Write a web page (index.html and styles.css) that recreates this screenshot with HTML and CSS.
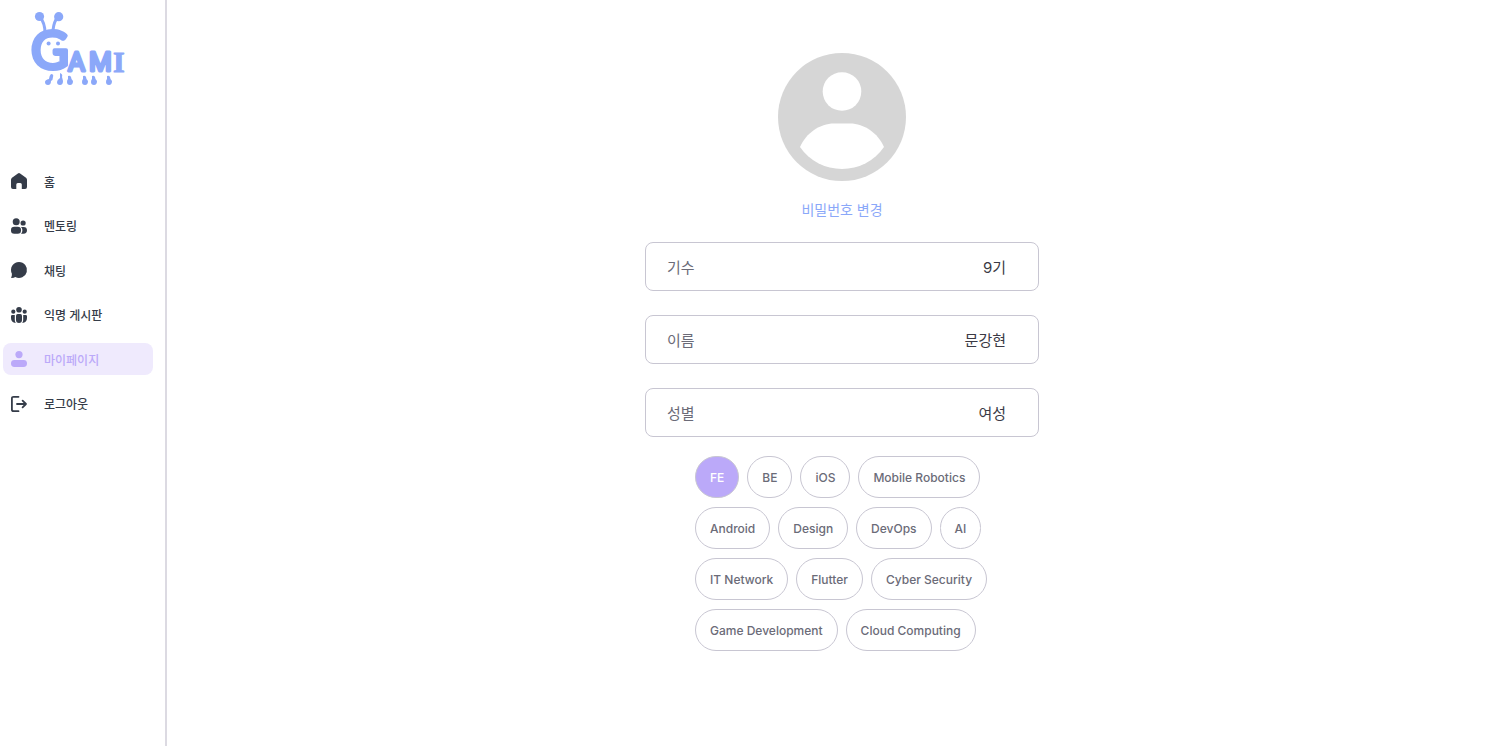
FILE: index.html
```
<!DOCTYPE html>
<html lang="ko">
<head>
  <meta charset="UTF-8">
  <meta name="viewport" content="width=device-width, initial-scale=1.0">
  <title>GAMI - 마이페이지</title>
  <link rel="stylesheet" href="styles.css">
</head>
<body>
  <div class="layout">
    <aside class="sidebar">
      <a href="#" class="logo" aria-label="GAMI">
        <svg width="96" height="76" viewBox="30 11 96 76">
          <!-- antennae -->
          <g class="logo-line">
            <path d="M40 17Q45 23 45 33M58 17Q54 21 53 30"/>
          </g>
          <circle cx="39.500" cy="16.500" r="4.600"/>
          <circle cx="58.700" cy="16.700" r="4.600"/>
          <!-- eyes -->
          <circle cx="48.600" cy="43.500" r="2"/>
          <circle cx="58" cy="43.500" r="2"/>
          <text class="logo-g" x="31" y="69">G</text>
          <text class="logo-text" x="68" y="71">A</text>
          <text class="logo-text" x="89" y="71">M</text>
          <text class="logo-slab" x="113" y="72">I</text>
          <!-- feet -->
          <path d="M51 74q3 0 2 3q0 3-2 4q0 4-3 4q-3 0-3-3q0-2 4-3q0-3 2-5z"/>
          <path d="M60 73q3 1 2 4l1 4q0 4-3 4q-3 0-3-3q0-2 3-4z"/>
          <path id="foot" d="M68 76q2-1 3 1q0 2 2 4q0 4-3 4q-3 0-3-3q0-2 1-3z"/>
          <use href="#foot" x="15"/>
          <use href="#foot" x="24"/>
          <use href="#foot" x="39"/>
        </svg>
      </a>
      <nav class="menu">
        <a href="#" class="menu-item">
          <svg class="icon" viewBox="0 0 16 16"><path d="M6.900.4Q8-.4 9.100.4L15 4.700q1 .8 1 2V14q0 2-2 2h-3.200v-4.500q0-1.500-1.500-1.500H6.800q-1.500 0-1.500 1.500V16H2q-2 0-2-2V6.700q0-1.200 1-2z"/></svg>
          <span>홈</span>
        </a>
        <a href="#" class="menu-item">
          <svg class="icon" viewBox="0 0 16 16"><circle cx="5.200" cy="3.800" r="3.500"/><circle cx="12.100" cy="5" r="2.600"/><rect y="8.800" width="10" height="7" rx="3.300"/><path d="M10 8.900h2.500q3.500 0 3.500 3.400t-3.500 3.500H10q1.400-1.400 1.400-3.500T10 8.900z"/></svg>
          <span>멘토링</span>
        </a>
        <a href="#" class="menu-item">
          <svg class="icon" viewBox="0 0 16 16"><path d="M8 0a8 8 0 1 1-3.700 15.100Q3 16 .7 16q-.9 0-.5-.8Q1 14 .9 11.700A8 8 0 0 1 8 0z"/></svg>
          <span>채팅</span>
        </a>
        <a href="#" class="menu-item">
          <svg class="icon" viewBox="0 0 16 16"><circle cx="8" cy="2.700" r="2.800"/><circle cx="2.300" cy="4.700" r="2.100"/><circle cx="13.700" cy="4.700" r="2.100"/><path d="M6.700 7h2.600Q11 7 11 9v4q0 3-3 3t-3-3V9q0-2 1.700-2zM1.300 8h2.500v5q0 1.700 1 3Q0 15.500 0 11V9.300Q0 8 1.300 8zM12.200 8h2.500Q16 8 16 9.300V11q0 4.500-4.800 5 1-1.300 1-3z"/></svg>
          <span>익명 게시판</span>
        </a>
        <a href="#" class="menu-item active">
          <svg class="icon" viewBox="0 0 16 16"><circle cx="8" cy="3.600" r="3.600"/><rect y="9" width="16" height="7" rx="3.400"/></svg>
          <span>마이페이지</span>
        </a>
        <a href="#" class="menu-item">
          <svg class="icon" viewBox="0 0 16 16"><path class="icon-line" d="M7.500.8H2.600Q.9.800.9 2.500v11q0 1.700 1.700 1.700h4.900M6 8h9M11.600 4.600 15 8l-3.400 3.400"/></svg>
          <span>로그아웃</span>
        </a>
      </nav>
    </aside>

    <main class="content">
      <svg class="avatar" viewBox="0 0 128 128">
        <circle class="avatar-bg" cx="64" cy="64" r="64"/>
        <circle class="avatar-body" cx="64" cy="38.500" r="19.300"/>
        <path class="avatar-body" d="M22 94C28 80 42 70.500 56 70.500h16c14 0 28 9.500 34 23.500a51 51 0 0 1-84 0z"/>
      </svg>
      <a href="#" class="password-link">비밀번호 변경</a>

      <form class="profile">
        <div class="field">
          <label for="generation">기수</label>
          <input id="generation" type="text" value="9기" readonly>
        </div>
        <div class="field">
          <label for="name">이름</label>
          <input id="name" type="text" value="문강현" readonly>
        </div>
        <div class="field">
          <label for="gender">성별</label>
          <input id="gender" type="text" value="여성" readonly>
        </div>
      </form>

      <div class="majors">
        <button type="button" class="major selected">FE</button>
        <button type="button" class="major">BE</button>
        <button type="button" class="major">iOS</button>
        <button type="button" class="major">Mobile Robotics</button>
        <button type="button" class="major">Android</button>
        <button type="button" class="major">Design</button>
        <button type="button" class="major">DevOps</button>
        <button type="button" class="major">AI</button>
        <button type="button" class="major">IT Network</button>
        <button type="button" class="major">Flutter</button>
        <button type="button" class="major">Cyber Security</button>
        <button type="button" class="major">Game Development</button>
        <button type="button" class="major">Cloud Computing</button>
      </div>
    </main>
  </div>
</body>
</html>
```
FILE: styles.css
```
* {
  box-sizing: border-box;
}
body {
  margin: 0;
  background-color: #ffffff;
  font-family: Inter, "Noto Sans CJK KR", sans-serif;
  color: #353c49;
}
a {
  color: inherit;
  text-decoration: none;
}
.layout {
  display: flex;
  min-height: 100vh;
}
.sidebar {
  flex: none;
  width: 167px;
  padding: 11px 12px 0 3px;
  border-right: 2px solid #dcdae2;
}
.logo {
  display: block;
  height: 76px;
  margin: 0 0 78px 27px;
  fill: #8ba8f9;
}
.logo-line {
  fill: none;
  stroke: #8ba8f9;
  stroke-width: 3;
}
.logo-g,
.logo-text,
.logo-slab {
  stroke: #8ba8f9;
  stroke-linejoin: round;
}
.logo-g {
  font: 400 52px Lato, sans-serif;
  stroke-width: 4;
}
.logo-text {
  font: 400 26px Roboto, sans-serif;
  stroke-width: 3;
}
.logo-slab {
  font: 700 30px "Liberation Serif", serif;
  stroke-width: 1;
}
.menu {
  display: flex;
  flex-direction: column;
  justify-content: space-between;
  height: 255px;
}
.menu-item {
  display: flex;
  align-items: center;
  gap: 17px;
  height: 32px;
  padding: 0 8px;
  border-radius: 8px;
  font-size: 12px;
  font-weight: 500;
}
.menu-item.active {
  background-color: #efeafd;
  color: #bba9f9;
}
.icon {
  width: 16px;
  height: 16px;
  fill: currentColor;
  overflow: visible;
}
.icon-line {
  fill: none;
  stroke: currentColor;
  stroke-width: 1.800;
  stroke-linecap: round;
  stroke-linejoin: round;
}
.content {
  flex: 1;
  display: flex;
  flex-direction: column;
  align-items: center;
  padding: 53px 0 40px 19px;
}
.avatar {
  width: 128px;
  height: 128px;
}
.avatar-bg {
  fill: #d6d6d6;
}
.avatar-body {
  fill: #ffffff;
}
.password-link {
  margin: 19px 0 22px;
  font-size: 14px;
  line-height: 20px;
  color: #8ba8f9;
}
.profile {
  display: flex;
  flex-direction: column;
  gap: 24px;
  width: 100%;
  max-width: 394px;
}
.field {
  display: flex;
  align-items: center;
  justify-content: space-between;
  height: 49px;
  padding: 0 32px 0 21px;
  border: 1px solid #c8c6d2;
  border-radius: 8px;
  font-size: 15px;
}
.field label {
  color: #6b6b78;
}
.field input {
  width: 200px;
  padding: 0;
  border: none;
  outline: none;
  background: none;
  font: inherit;
  text-align: right;
  color: #3b3a45;
}
.majors {
  display: flex;
  flex-wrap: wrap;
  gap: 9px 8px;
  max-width: 294px;
  margin-top: 19px;
}
.major {
  height: 42px;
  padding: 0 14px;
  border: 1px solid #c8c6d2;
  border-radius: 21px;
  background-color: #ffffff;
  font-family: inherit;
  font-size: 12px;
  font-weight: 500;
  color: #6b6b78;
}
.major.selected {
  background-color: #bba9f9;
  color: #ffffff;
}
```
